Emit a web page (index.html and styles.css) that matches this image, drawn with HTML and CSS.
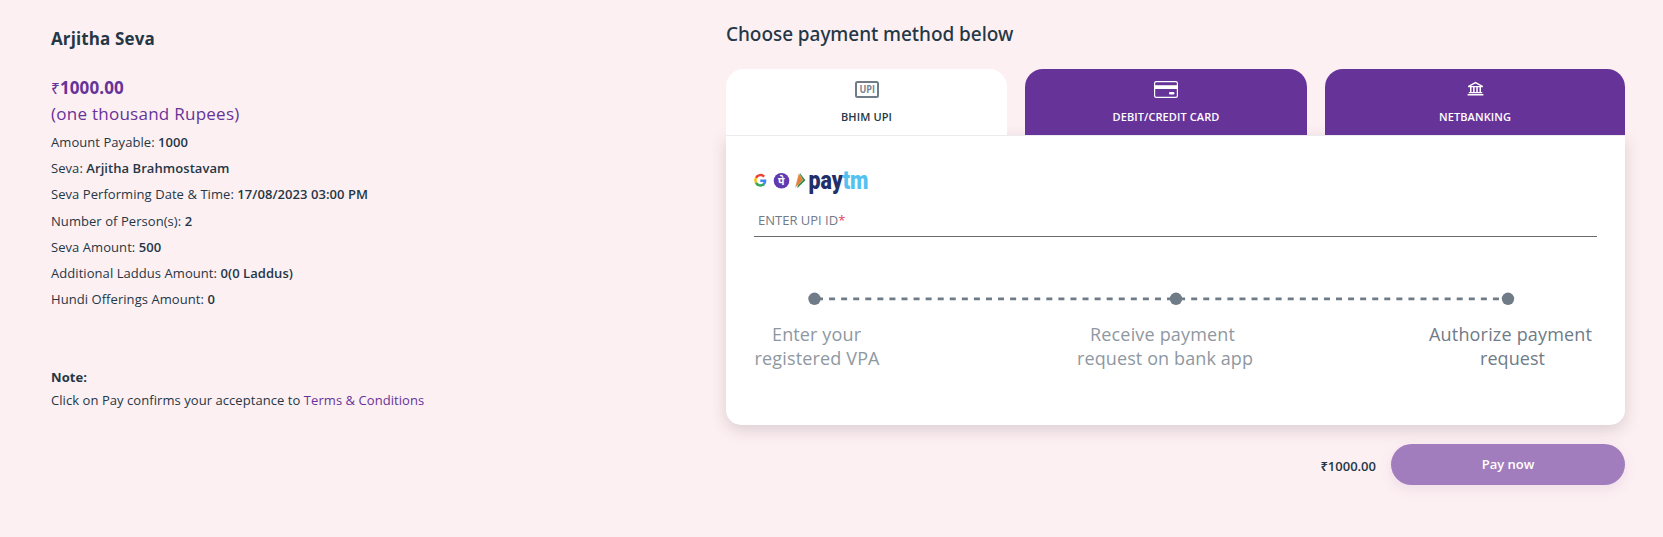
FILE: index.html
```html
<!DOCTYPE html>
<html lang="en">
<head>
    <meta charset="UTF-8">
    <meta name="viewport" content="width=device-width, initial-scale=1.0">
    <title>Payment</title>
    <link rel="stylesheet" href="styles.css">
</head>
<body>
    <div class="page">
        <div class="summary">
            <h2 class="summary-title">Arjitha Seva</h2>
            <div class="amount"><span class="rupee">₹</span>1000.00</div>
            <div class="amount-words">(one thousand Rupees)</div>
            <ul class="details">
                <li>Amount Payable: <b>1000</b></li>
                <li>Seva: <b>Arjitha Brahmostavam</b></li>
                <li>Seva Performing Date &amp; Time: <b>17/08/2023 03:00 PM</b></li>
                <li>Number of Person(s): <b>2</b></li>
                <li>Seva Amount: <b>500</b></li>
                <li>Additional Laddus Amount: <b>0(0 Laddus)</b></li>
                <li>Hundi Offerings Amount: <b>0</b></li>
            </ul>
            <div class="note">
                <strong>Note:</strong>
                <p>Click on Pay confirms your acceptance to <a href="#">Terms &amp; Conditions</a></p>
            </div>
        </div>

        <div class="payment">
            <h1 class="payment-title">Choose payment method below</h1>

            <div class="tabs">
                <div class="tab active">
                    <svg width="24" height="17" viewBox="0 0 24 17">
                        <rect x="1" y="1" width="22" height="15" rx="1.5" fill="none" stroke="#6f7b87" stroke-width="2"/>
                        <text class="upi-text" x="4.4" y="12.3" textLength="15.6" lengthAdjust="spacingAndGlyphs">UPI</text>
                    </svg>
                    <span>BHIM UPI</span>
                </div>
                <div class="tab">
                    <svg width="24" height="17" viewBox="0 0 24 17">
                        <rect x="0.6" y="0.6" width="22.8" height="15.8" rx="1.6" fill="none" stroke="#fff" stroke-width="1.2"/>
                        <path d="M1 4.2h22v3.8H1z" fill="#fff"/>
                        <rect x="15" y="11" width="5.4" height="2.6" rx="1" fill="#fff"/>
                    </svg>
                    <span>DEBIT/CREDIT CARD</span>
                </div>
                <div class="tab">
                    <svg width="17" height="17" viewBox="0 0 17 17">
                        <path d="M1.2 5.6L8.5 1.6l7.3 4" fill="none" stroke="#fff" stroke-width="1.3"/>
                        <path d="M1.4 5.1h14.2v1.2H1.4zM3 6h1.5v5.5H3zM6.1 6h1.5v5.5H6.1zM9.3 6h1.5v5.5H9.3zM12.5 6H14v5.5h-1.5zM1.8 11h13.4v1.2H1.8zM.6 13h15.8v1.6H.6z" fill="#fff"/>
                    </svg>
                    <span>NETBANKING</span>
                </div>
            </div>

            <div class="panel">
                <svg class="logos" width="116" height="22" viewBox="0 0 116 22">
                    <!-- Google -->
                    <g fill="none" stroke-width="2.5">
                        <path d="M10.2 4.6A5.1 5.1 0 0 0 2 5.9" stroke="#ea4335"/>
                        <path d="M2 5.9a5.1 5.1 0 0 0 0 4.9" stroke="#fbbc05"/>
                        <path d="M2 10.8a5.1 5.1 0 0 0 7.8 1.4" stroke="#34a853"/>
                        <path d="M9.6 12.3a5 5 0 0 0 1.5-3.6H6.3" stroke="#4285f4"/>
                    </g>
                    <!-- PhonePe -->
                    <circle cx="27.5" cy="8.7" r="7.8" fill="#5f3ab0"/>
                    <text class="phonepe" x="27.3" y="13" text-anchor="middle">पे</text>
                    <!-- BHIM -->
                    <path d="M46 1.2l5.4 7.1-8.2 8z" fill="#2b8a48"/>
                    <path d="M44.8 1l4.2 7.1-8 8z" fill="#e5803c" stroke="#fff" stroke-width=".3"/>
                    <!-- Paytm -->
                    <text class="paytm" x="54.5" y="17" textLength="60" lengthAdjust="spacingAndGlyphs" fill="#22306a">pay<tspan fill="#54c1f0">tm</tspan></text>
                </svg>

                <div class="field">
                    <label>ENTER UPI ID<span class="required">*</span></label>
                </div>

                <svg class="steps" width="843" height="90" viewBox="0 0 843 90">
                    <path d="M63 9.8H747" stroke="#6f7b87" stroke-width="2.8" stroke-dasharray="6 6.07"/>
                    <circle cx="60.5" cy="9.8" r="6.2"/>
                    <circle cx="422" cy="9.8" r="6.2"/>
                    <circle cx="754" cy="9.8" r="6.2"/>
                    <g class="step-text muted">
                        <text x="18" y="52" textLength="89">Enter your</text>
                        <text x="0.5" y="76" textLength="125">registered VPA</text>
                        <text x="336" y="52" textLength="145">Receive payment</text>
                        <text x="323" y="76" textLength="176">request on bank app</text>
                    </g>
                    <g class="step-text">
                        <text x="675" y="52" textLength="163">Authorize payment</text>
                        <text x="726" y="76" textLength="65">request</text>
                    </g>
                </svg>
            </div>

            <div class="pay-row">
                <span class="total">₹1000.00</span>
                <button class="pay-btn" type="button">Pay now</button>
            </div>
        </div>
    </div>
</body>
</html>
```
FILE: styles.css
```css
* { box-sizing: border-box; }
body { margin: 0; background: #fdf0f2; color: #243746; font-family: "Open Sans", "Noto Sans", sans-serif; font-size: 13px; }
h1, h2, p, ul { margin: 0; padding: 0; }

.page { display: grid; grid-template-columns: 675px 899px; padding-left: 51px; height: 537px; }

.summary { padding-top: 26px; letter-spacing: 0.06px; }
.summary-title { font-size: 17px; font-weight: 700; line-height: 26px; letter-spacing: 0.12px; }
.amount { margin-top: 23px; font-size: 17px; font-weight: 700; line-height: 26px; letter-spacing: 0.1px; color: #663399; }
.rupee { font-size: 15.5px; font-weight: 400; }
.amount-words { font-size: 17px; line-height: 26px; letter-spacing: 0.26px; color: #663399; }
.details { list-style: none; margin-top: 2px; }
.details li { line-height: 26.2px; }
.details b { font-weight: 600; }
.note { margin-top: 54px; line-height: 23px; }
.note strong { font-weight: 700; }
.note a { color: #663399; text-decoration: none; }

.payment { padding-top: 19px; }
.payment-title { font-family: "Noto Sans", "Open Sans", sans-serif; font-size: 19px; font-weight: 500; line-height: 30px; letter-spacing: -0.06px; }
.tabs { display: grid; grid-template-columns: 281px 282px 300px; gap: 18px; margin-top: 20px; }
.tab { display: flex; flex-direction: column; align-items: center; height: 66px; padding-top: 12px; border-radius: 18px 18px 0 0; background: #663399; color: #fff; font-size: 11px; font-weight: 600; line-height: 16px; letter-spacing: 0.1px; }
.tab span { margin-top: 11px; }
.tab.active { background: #fff; color: #243746; }
.upi-text { font-size: 10px; font-weight: 700; letter-spacing: 0; fill: #7b8691; }

.panel { height: 290px; padding: 36px 28px 0; background: #fff; border-top: 1px solid #ececf0; border-radius: 0 0 15px 15px; box-shadow: 0 5px 16px rgba(50, 30, 50, 0.17); }
.logos, .steps { display: block; overflow: visible; }
.phonepe { font-family: "Noto Sans", "Noto Sans Devanagari", sans-serif; font-size: 10.5px; font-weight: 700; fill: #fff; }
.paytm { font-family: Roboto, "Open Sans", sans-serif; font-size: 25px; font-weight: 900; }
.field { height: 43px; padding: 17px 4px 0; border-bottom: 1px solid #6b6b6b; color: #6f7b87; line-height: 18px; }
.required { color: #e0435c; }
.steps { margin-top: 52px; fill: #6f7b87; }
.step-text { font-size: 18px; }
.muted { fill: #8f98a1; }

.pay-row { display: flex; justify-content: flex-end; align-items: center; gap: 15px; margin-top: 19px; }
.total { padding-top: 3px; font-weight: 600; }
.pay-btn { width: 234px; height: 41px; padding: 0 0 1px; border: none; border-radius: 21px; background: #a17dbe; color: #fff; font-family: inherit; font-size: 13px; font-weight: 600; box-shadow: 0 4px 14px rgba(102, 51, 153, 0.1); }
```
